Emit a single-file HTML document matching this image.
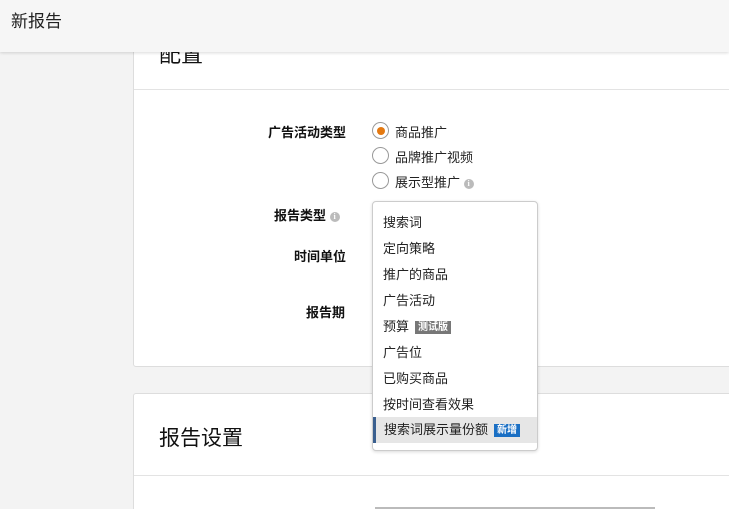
<!DOCTYPE html>
<html><head><meta charset="utf-8"><style>
*{margin:0;padding:0;box-sizing:border-box}
html,body{width:729px;height:509px;overflow:hidden}
body{background:#f3f3f3;font-family:"Liberation Sans","Noto Sans CJK SC",sans-serif;color:#111;position:relative}
.hdr{position:absolute;left:0;top:0;width:729px;height:52px;background:#f6f6f6;box-shadow:0 1px 3px rgba(0,0,0,.15);z-index:5}
.hdr span{position:absolute;left:11px;top:7px;font-size:17px;color:#222}
.card{position:absolute;left:133px;width:600px;background:#fff;border:1px solid #ddd;border-radius:3px}
.abs{position:absolute;white-space:nowrap}
.lbl{font-size:13px;font-weight:bold;color:#111}
.radio{position:absolute;width:17px;height:17px;border:1px solid #999;border-radius:50%;background:#fff}
.radio.on::after{content:"";position:absolute;left:3.5px;top:3.5px;width:8px;height:8px;border-radius:50%;background:#e47911}
.opt{font-size:13px;color:#222}
.info{display:inline-block;width:10px;height:10px;border-radius:50%;background:#bbb;color:#fff;font-size:8px;line-height:10px;text-align:center;font-weight:bold;vertical-align:middle;font-family:"Liberation Serif",serif}
.dd{position:absolute;left:372px;top:201px;width:166px;height:250px;background:#fff;border:1px solid #ccc;border-radius:4px;box-shadow:0 1px 3px rgba(0,0,0,.15);z-index:3}
.it{position:absolute;left:0;width:164px;height:26px;font-size:13px;color:#222;padding-left:10px;line-height:26px}
.it.sel{background:#e6e6e6;border-left:3px solid #3a5f8f;padding-left:8px}
.badge{display:inline-block;font-size:10px;color:#fff;padding:0 3px;line-height:13px;font-weight:bold;margin-left:6px;vertical-align:1px}
</style></head><body>
<div class="hdr"><span>新报告</span></div>
<div class="card" style="top:20px;height:347px">
  <div class="abs" style="left:25px;top:16px;font-size:22px">配置</div>
  <div style="position:absolute;left:0;top:68px;width:600px;height:1px;background:#e3e3e3"></div>
</div>
<div class="abs lbl" style="left:268px;top:122px">广告活动类型</div>
<div class="radio on" style="left:372px;top:122px"></div>
<div class="abs opt" style="left:395px;top:122px">商品推广</div>
<div class="radio" style="left:372px;top:147px"></div>
<div class="abs opt" style="left:395px;top:147px">品牌推广视频</div>
<div class="radio" style="left:372px;top:172px"></div>
<div class="abs opt" style="left:395px;top:172px">展示型推广 <span class="info">i</span></div>
<div class="abs lbl" style="left:274px;top:205px">报告类型 <span class="info">i</span></div>
<div class="abs lbl" style="left:294px;top:246px">时间单位</div>
<div class="abs lbl" style="left:306px;top:302px">报告期</div>
<div class="card" style="top:393px;height:130px">
  <div class="abs" style="left:25px;top:28px;font-size:21px">报告设置</div>
  <div style="position:absolute;left:0;top:81px;width:600px;height:1px;background:#e3e3e3"></div>
</div>
<div style="position:absolute;left:375px;top:507px;width:280px;height:2px;background:#bbb"></div>
<div class="dd">
  <div class="it" style="top:8px">搜索词</div>
  <div class="it" style="top:34px">定向策略</div>
  <div class="it" style="top:60px">推广的商品</div>
  <div class="it" style="top:86px">广告活动</div>
  <div class="it" style="top:112px">预算<span class="badge" style="background:#777">测试版</span></div>
  <div class="it" style="top:138px">广告位</div>
  <div class="it" style="top:164px">已购买商品</div>
  <div class="it" style="top:190px">按时间查看效果</div>
  <div class="it sel" style="top:215px">搜索词展示量份额<span class="badge" style="background:#1a6fc4">新增</span></div>
</div>
</body></html>
